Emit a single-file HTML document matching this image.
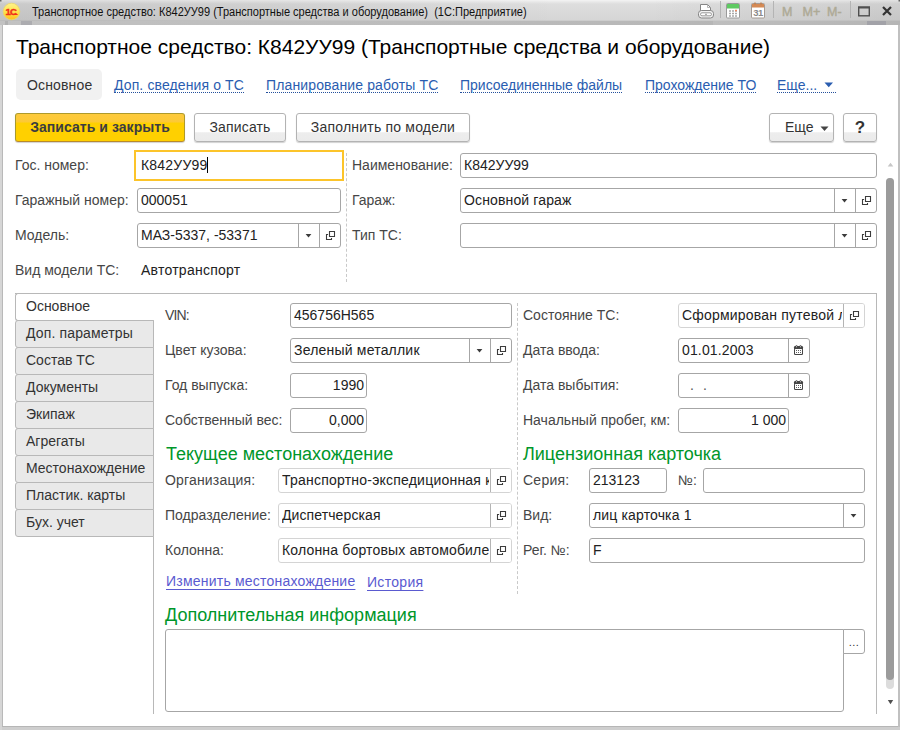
<!DOCTYPE html>
<html lang="ru">
<head>
<meta charset="utf-8">
<title>Транспортное средство</title>
<style>
*{box-sizing:border-box;margin:0;padding:0}
html,body{width:900px;height:730px;overflow:hidden;background:#fff}
body{font-family:"Liberation Sans",Arial,sans-serif;font-size:14px;color:#333;position:relative}
.abs{position:absolute}
#frame{position:absolute;left:0;top:0;width:900px;height:730px;background:#cecece}
#frame i{position:absolute;display:block}
#titlebar{position:absolute;left:0;top:0;width:900px;height:25px;background:linear-gradient(90deg,rgba(0,0,0,.09) 0,rgba(0,0,0,.06) 30%,rgba(0,0,0,0) 62%,rgba(0,0,0,0) 72%,rgba(0,0,0,.07) 100%),linear-gradient(#f4f4f4 0,#e8e8e8 2px,#dedede 4px,#d6d6d6 20px,#c4c4c4 21px,#c4c4c4 25px)}
#content{position:absolute;left:3px;top:25px;width:895px;height:701px;background:#fff}
#ttext{position:absolute;left:32px;top:5px;font-size:12px;line-height:14px;color:#111;white-space:nowrap;transform:scaleX(0.919);transform-origin:0 0}
h1{position:absolute;left:16px;top:35px;font-size:21px;font-weight:normal;line-height:24px;color:#000;white-space:nowrap}
.lbl{position:absolute;margin-left:-1px;white-space:nowrap;line-height:16px;font-size:14px;color:#464646}
.inp{position:absolute;height:25px;border:1px solid #a6a6a6;border-radius:3px;background:#fff;font-size:14px;line-height:16px;color:#222;white-space:nowrap;overflow:hidden;padding:3px 0 0 3px}
.inp.ro{border-color:#d4d4d4;background:#fff}
.t{display:block;overflow:hidden;white-space:nowrap}
.inp.r{text-align:right;padding-right:2px;padding-left:0}
.sep{position:absolute;top:0;width:1px;height:23px;background:#a6a6a6}
.ro .sep{background:#d4d4d4}
.btn{position:absolute;top:113px;height:29px;border:1px solid #b3b3b3;border-radius:3px;background:linear-gradient(#fff 0,#fff 67%,#ededed 69%,#ebebeb 100%);box-shadow:0 1px 1px rgba(0,0,0,.18);font-size:14px;line-height:16px;color:#333;text-align:center;padding-top:5px;white-space:nowrap}
.lnk{position:absolute;top:77px;font-size:14px;line-height:16px;color:#2a5db0;white-space:nowrap;border-bottom:1px dotted #24509c;height:16px}
.tab{position:absolute;left:15px;width:139px;height:28px;border:1px solid #b8b8b8;border-radius:3px 0 0 3px;background:#e9e9e9;font-size:14px;line-height:16px;padding:4px 0 0 10px;color:#333;white-space:nowrap}
.gh{position:absolute;font-size:18px;line-height:20px;color:#00962a;white-space:nowrap}
.ul{color:#5a5ad0;text-decoration:underline;text-underline-offset:3px;text-decoration-thickness:1px;text-decoration-skip-ink:none}
.vd{position:absolute;width:0;border-left:1px dashed #c9c9c9}
</style>
</head>
<body>
<svg width="0" height="0" style="position:absolute"><defs>
<g id="open"><path d="M9.500 7.500h5v5h-5z M8.100 10.500h-1.600v5h5v-1.600" fill="none" stroke="#3c3c3c" stroke-width="1.100"/></g>
<g id="cal"><rect x="6.800" y="5.900" width="1.400" height="2.500" rx="0.500" fill="#454545"/><rect x="10.800" y="5.900" width="1.400" height="2.500" rx="0.500" fill="#454545"/><rect x="5" y="7" width="9" height="9" rx="1.300" fill="#454545"/><rect x="6" y="10" width="7" height="5" rx="0.400" fill="#fff"/><rect x="7.150" y="6.600" width="0.700" height="1.700" fill="#ddd"/><rect x="11.150" y="6.600" width="0.700" height="1.700" fill="#ddd"/><circle cx="7.500" cy="11.500" r="0.560" fill="#454545"/><circle cx="9.500" cy="11.500" r="0.560" fill="#454545"/><circle cx="11.500" cy="11.500" r="0.560" fill="#454545"/><circle cx="7.500" cy="13.500" r="0.560" fill="#454545"/><circle cx="9.500" cy="13.500" r="0.560" fill="#454545"/><circle cx="11.500" cy="13.500" r="0.560" fill="#454545"/></g>
</defs></svg>
<div id="frame"><i style="left:2px;top:25px;width:1px;height:702px;background:#b9b9b9"></i><i style="left:0;top:25px;width:2px;height:705px;background:#d6d6d6"></i><i style="left:2px;top:726px;width:897px;height:1px;background:#b6b6b6"></i><i style="left:898px;top:25px;width:2px;height:702px;background:#c0c0c0"></i></div>
<div id="titlebar">
  <div id="ttext">Транспортное средство: К842УУ99 (Транспортные средства и оборудование)&nbsp; (1С:Предприятие)</div>
</div>
<svg class="abs" style="left:0;top:0" width="900" height="25" font-family="Liberation Sans, sans-serif">
<defs><linearGradient id="yg" x1="0" y1="0" x2="0" y2="1"><stop offset="0" stop-color="#fff48a"/><stop offset="0.55" stop-color="#ffe14a"/><stop offset="1" stop-color="#ffbf1f"/></linearGradient></defs>
<linearGradient id="sg" x1="0" y1="0" x2="1" y2="0"><stop offset="0" stop-color="#cacaca"/><stop offset="0.750" stop-color="#c0c0c0"/><stop offset="1" stop-color="#b5b5b5"/></linearGradient><rect x="0" y="21" width="900" height="4" fill="url(#sg)"/>
<rect x="5" y="21" width="3" height="4" fill="#b9b9b9"/><rect x="21" y="21" width="11" height="4" fill="#b4b4b8"/>
<rect x="0" y="21" width="713" height="4" fill="#000" opacity="0.04"/>
<rect x="867" y="21" width="19" height="4" fill="#a2a2a8"/>
<circle cx="11.5" cy="11.5" r="8.3" fill="url(#yg)" stroke="#ecd56a" stroke-width="0.8"/>
<text x="5.6" y="15" font-size="9.5" font-weight="bold" fill="#f0301a" letter-spacing="-0.9" stroke="#f0301a" stroke-width="0.4">1С</text>
<path d="M13 14.500h4.200" stroke="#f0301a" stroke-width="1.100" stroke-linecap="round"/>
<!-- printer -->
<path d="M700.500 11v-6.500h7l3 3v3.500z" fill="#fff" stroke="#858585"/>
<path d="M707.500 4.500v3h3" fill="none" stroke="#a5a5a5" stroke-width="0.800"/>
<rect x="698.500" y="10.500" width="15" height="7.500" rx="3" fill="#f2f2f2" stroke="#858585"/>
<rect x="700.500" y="12.800" width="11" height="3" rx="1.500" fill="#fff" stroke="#8f8f8f" stroke-width="0.900"/>
<rect x="705" y="13.800" width="2" height="1" fill="#999"/>
<path d="M720.5 1v17M773.5 1v17M850.5 1v17" stroke="#b4b4b4"/>
<!-- calculator -->
<rect x="726.5" y="3.5" width="13" height="14.5" rx="1" fill="#fff" stroke="#9a9a9a"/>
<rect x="727" y="4" width="12" height="4.5" fill="#5fca62"/>
<path d="M729 11h2M732 11h2M735 11h2M729 13.500h2M732 13.500h2M735 13.500h2M729 16h2M732 16h2M735 16h2" stroke="#a8a8a8" stroke-width="1.400"/>
<path d="M735 10.500h2" stroke="#f08a60" stroke-width="1.400"/>
<!-- calendar -->
<rect x="751.5" y="3.500" width="13" height="14.500" rx="1" fill="#fff" stroke="#a59a92"/>
<rect x="752" y="4" width="12" height="3.500" fill="#d58a55"/>
<path d="M755 2.500v2M761 2.500v2" stroke="#c07a48" stroke-width="1.300"/>
<text x="753.200" y="16" font-size="9.500" font-weight="bold" fill="#8a8a8a" letter-spacing="-0.500">31</text>
<text x="782" y="16.400" font-size="12.500" fill="#aeaa96" stroke="#aeaa96" stroke-width="0.450">M</text>
<text x="802.500" y="16.400" font-size="12.500" fill="#aeaa96" stroke="#aeaa96" stroke-width="0.450">M+</text>
<text x="827" y="16.400" font-size="12.500" fill="#aeaa96" stroke="#aeaa96" stroke-width="0.450">M-</text>
<!-- max / close -->
<rect x="858.700" y="7.200" width="10.600" height="8.600" fill="none" stroke="#4f4f4f" stroke-width="1.400"/>
<rect x="858" y="6.500" width="12" height="2" fill="#4f4f4f"/>
<path d="M883 7l8 8M891 7l-8 8" stroke="#333" stroke-width="2.200"/>
<rect x="0" y="0" width="1.500" height="1.500" fill="#666"/><rect x="898.500" y="0" width="1.500" height="1.500" fill="#666"/>
</svg>
<div id="content"></div>

<h1>Транспортное средство: К842УУ99 (Транспортные средства и оборудование)</h1>

<!-- nav -->
<div class="abs" style="left:16px;top:69px;width:86px;height:31px;background:#f1f1f1;border-radius:5px"></div>
<div class="lbl" style="left:28px;top:77px;color:#333;letter-spacing:0.15px">Основное</div>
<div class="lnk" style="left:114px;letter-spacing:0.12px">Доп. сведения о ТС</div>
<div class="lnk" style="left:266px;letter-spacing:0.13px">Планирование работы ТС</div>
<div class="lnk" style="left:460px">Присоединенные файлы</div>
<div class="lnk" style="left:645px">Прохождение ТО</div>
<div class="lnk" style="left:777px;width:59px">Еще...<svg class="abs" style="left:47px;top:5px" width="10" height="6"><path d="M0.500 0.500h8.500l-4.250 4.800z" fill="#2a5db0"/></svg></div>

<!-- toolbar -->
<div class="btn" style="left:15px;width:170px;background:linear-gradient(#fdca3c 0,#fcc936 30%,#ffd000 33%,#ffd000 100%);border-color:#ad9a2c #b09a28 #b98a2a #a89a2c;font-weight:bold;color:#3c3c40;letter-spacing:0.05px">Записать и закрыть</div>
<div class="btn" style="left:194px;width:92px;letter-spacing:0.15px">Записать</div>
<div class="btn" style="left:296px;width:174px;letter-spacing:0.2px">Заполнить по модели</div>
<div class="btn" style="left:769px;width:65px;text-align:left;padding-left:15px">Еще<svg class="abs" style="left:50px;top:12px" width="10" height="6"><path d="M0.500 0.500h8l-4 4.500z" fill="#444"/></svg></div>
<div class="btn" style="left:843px;width:34px;font-weight:bold;font-size:17px;padding-top:6px">?</div>


<!-- top form -->
<div class="lbl" style="left:16px;top:157px">Гос. номер:</div>
<div class="abs" style="left:134px;top:150px;width:210px;height:31px;border:2px solid #fcc42a;background:#fff"></div>
<div class="lbl" style="left:142px;top:157px;color:#222;letter-spacing:0.2px">К842УУ99</div>
<div class="abs" style="left:207px;top:157px;width:1px;height:16px;background:#000"></div>
<div class="lbl" style="left:16px;top:192px">Гаражный номер:</div>
<div class="inp" style="left:137px;top:188px;width:204px">000051</div>
<div class="lbl" style="left:16px;top:227px">Модель:</div>
<div class="inp" style="left:137px;top:223px;width:204px">МАЗ-5337, -53371<i class="sep" style="left:160px"></i><i class="sep" style="left:181px"></i><svg class="abs" style="left:161px;top:0" width="20" height="23"><path d="M6.600 10.100h5.800l-2.900 3.300z" fill="#3c3c3c"/></svg><svg class="abs" style="left:182px;top:0" width="20" height="23"><use href="#open"/></svg></div>
<div class="lbl" style="left:16px;top:262px">Вид модели ТС:</div>
<div class="lbl" style="left:142px;top:262px;color:#222;letter-spacing:0.25px">Автотранспорт</div>
<div class="vd" style="left:346px;top:153px;height:129px"></div>
<div class="lbl" style="left:353px;top:157px">Наименование:</div>
<div class="inp" style="left:460px;top:153px;width:417px">К842УУ99</div>
<div class="lbl" style="left:353px;top:192px">Гараж:</div>
<div class="inp" style="left:460px;top:188px;width:417px"><span style="letter-spacing:0.14px">Основной гараж</span><i class="sep" style="left:373px"></i><i class="sep" style="left:394px"></i><svg class="abs" style="left:374px;top:0" width="20" height="23"><path d="M6.600 10.100h5.800l-2.900 3.300z" fill="#3c3c3c"/></svg><svg class="abs" style="left:395px;top:0" width="20" height="23"><use href="#open"/></svg></div>
<div class="lbl" style="left:353px;top:227px">Тип ТС:</div>
<div class="inp" style="left:460px;top:223px;width:417px"><i class="sep" style="left:373px"></i><i class="sep" style="left:394px"></i><svg class="abs" style="left:374px;top:0" width="20" height="23"><path d="M6.600 10.100h5.800l-2.900 3.300z" fill="#3c3c3c"/></svg><svg class="abs" style="left:395px;top:0" width="20" height="23"><use href="#open"/></svg></div>

<!-- tab panel -->
<div class="abs" style="left:15px;top:293px;width:862px;height:1px;background:#b8b8b8"></div>
<div class="abs" style="left:876px;top:293px;width:1px;height:421px;background:#b8b8b8"></div>
<div class="abs" style="left:153px;top:320px;width:1px;height:394px;background:#b8b8b8"></div>
<div class="tab" style="top:293px;background:#fff;border-right:none">Основное</div>
<div class="tab" style="top:320px;letter-spacing:0.14px">Доп. параметры</div>
<div class="tab" style="top:347px">Состав ТС</div>
<div class="tab" style="top:374px">Документы</div>
<div class="tab" style="top:401px">Экипаж</div>
<div class="tab" style="top:428px">Агрегаты</div>
<div class="tab" style="top:455px">Местонахождение</div>
<div class="tab" style="top:482px">Пластик. карты</div>
<div class="tab" style="top:509px">Бух. учет</div>

<!-- inner form -->
<div class="lbl" style="left:166px;top:307px;letter-spacing:-0.9px">VIN:</div>
<div class="inp" style="left:290px;top:303px;width:222px">456756H565</div>
<div class="lbl" style="left:166px;top:342px">Цвет кузова:</div>
<div class="inp" style="left:290px;top:338px;width:222px"><span style="letter-spacing:0.2px">Зеленый металлик</span><i class="sep" style="left:178px"></i><i class="sep" style="left:199px"></i><svg class="abs" style="left:179px;top:0" width="20" height="23"><path d="M6.600 10.100h5.800l-2.900 3.300z" fill="#3c3c3c"/></svg><svg class="abs" style="left:200px;top:0" width="20" height="23"><use href="#open"/></svg></div>
<div class="lbl" style="left:166px;top:377px">Год выпуска:</div>
<div class="inp r" style="left:290px;top:373px;width:77px">1990</div>
<div class="lbl" style="left:166px;top:412px">Собственный вес:</div>
<div class="inp r" style="left:290px;top:408px;width:77px">0,000</div>
<div class="vd" style="left:517px;top:303px;height:291px"></div>
<div class="lbl" style="left:524px;top:307px">Состояние ТС:</div>
<div class="inp ro" style="left:678px;top:303px;width:187px"><span class="t" style="width:160px;letter-spacing:0.2px">Сформирован путевой лист</span><i class="sep" style="left:164px;width:22px;background:#fff;border-left:1px solid #b4b4b4"></i><svg class="abs" style="left:165px;top:0" width="20" height="23"><use href="#open"/></svg></div>
<div class="lbl" style="left:524px;top:342px">Дата ввода:</div>
<div class="inp" style="left:678px;top:338px;width:132px"><span style="letter-spacing:0.15px">01.01.2003</span><i class="sep" style="left:109px"></i><svg class="abs" style="left:110px;top:0" width="20" height="23"><use href="#cal"/></svg></div>
<div class="lbl" style="left:524px;top:377px">Дата выбытия:</div>
<div class="inp" style="left:678px;top:373px;width:132px"><span style="margin-left:8px;color:#555">.</span><span style="margin-left:9px;color:#555">.</span><i class="sep" style="left:109px"></i><svg class="abs" style="left:110px;top:0" width="20" height="23"><use href="#cal"/></svg></div>
<div class="lbl" style="left:524px;top:412px">Начальный пробег, км:</div>
<div class="inp r" style="left:678px;top:408px;width:111px">1 000</div>

<div class="gh" style="left:166px;top:444px">Текущее местонахождение</div>
<div class="lbl" style="left:166px;top:472px;letter-spacing:0.17px">Организация:</div>
<div class="inp ro" style="left:278px;top:468px;width:234px"><span class="t" style="width:207px;letter-spacing:0.22px">Транспортно-экспедиционная компания</span><i class="sep" style="left:211px;width:22px;background:#fff;border-left:1px solid #b4b4b4"></i><svg class="abs" style="left:212px;top:0" width="20" height="23"><use href="#open"/></svg></div>
<div class="lbl" style="left:166px;top:507px">Подразделение:</div>
<div class="inp ro" style="left:278px;top:503px;width:234px"><span class="t" style="width:207px;letter-spacing:0.1px">Диспетчерская</span><i class="sep" style="left:211px;width:22px;background:#fff;border-left:1px solid #b4b4b4"></i><svg class="abs" style="left:212px;top:0" width="20" height="23"><use href="#open"/></svg></div>
<div class="lbl" style="left:166px;top:542px">Колонна:</div>
<div class="inp ro" style="left:278px;top:538px;width:234px"><span class="t" style="width:207px;letter-spacing:0.17px">Колонна бортовых автомобилей</span><i class="sep" style="left:211px;width:22px;background:#fff;border-left:1px solid #b4b4b4"></i><svg class="abs" style="left:212px;top:0" width="20" height="23"><use href="#open"/></svg></div>
<div class="lbl ul" style="left:167px;top:573px;letter-spacing:0.22px">Изменить местонахождение</div>
<div class="lbl ul" style="left:368px;top:574px;letter-spacing:0.3px">История</div>

<div class="gh" style="left:523px;top:444px">Лицензионная карточка</div>
<div class="lbl" style="left:524px;top:472px;letter-spacing:0.25px">Серия:</div>
<div class="inp" style="left:589px;top:468px;width:78px">213123</div>
<div class="lbl" style="left:679px;top:472px">№:</div>
<div class="inp" style="left:703px;top:468px;width:162px"></div>
<div class="lbl" style="left:524px;top:507px">Вид:</div>
<div class="inp" style="left:589px;top:503px;width:276px"><span style="letter-spacing:0.15px">лиц карточка 1</span><i class="sep" style="left:253px"></i><svg class="abs" style="left:254px;top:0" width="20" height="23"><path d="M6.600 10.100h5.800l-2.900 3.300z" fill="#3c3c3c"/></svg></div>
<div class="lbl" style="left:524px;top:542px">Рег. №:</div>
<div class="inp" style="left:589px;top:538px;width:276px">F</div>

<div class="gh" style="left:165px;top:605px">Дополнительная информация</div>
<div class="abs" style="left:165px;top:629px;width:679px;height:83px;border:1px solid #a6a6a6;border-radius:3px 0 3px 3px;background:#fff"></div>
<div class="abs" style="left:843px;top:629px;width:22px;height:25px;border:1px solid #a6a6a6;border-radius:0 3px 3px 0;background:#fff;font-size:11px;line-height:12px;text-align:center;padding-top:6px;color:#333;letter-spacing:0.5px">...</div>

<!-- scrollbar -->
<svg class="abs" style="left:882px;top:150px" width="16" height="570">
<path d="M5.700 16.600h5.600l-2.800 -3.800z" fill="#c6c6c6"/>
<rect x="4" y="28" width="8" height="511" rx="4" fill="#dcdcdc"/>
<rect x="4" y="28" width="8" height="502" rx="4" fill="#9b9b9b"/>
<path d="M5.800 550h5.400l-2.700 4.200z" fill="#505050"/>
</svg>
</body>
</html>
